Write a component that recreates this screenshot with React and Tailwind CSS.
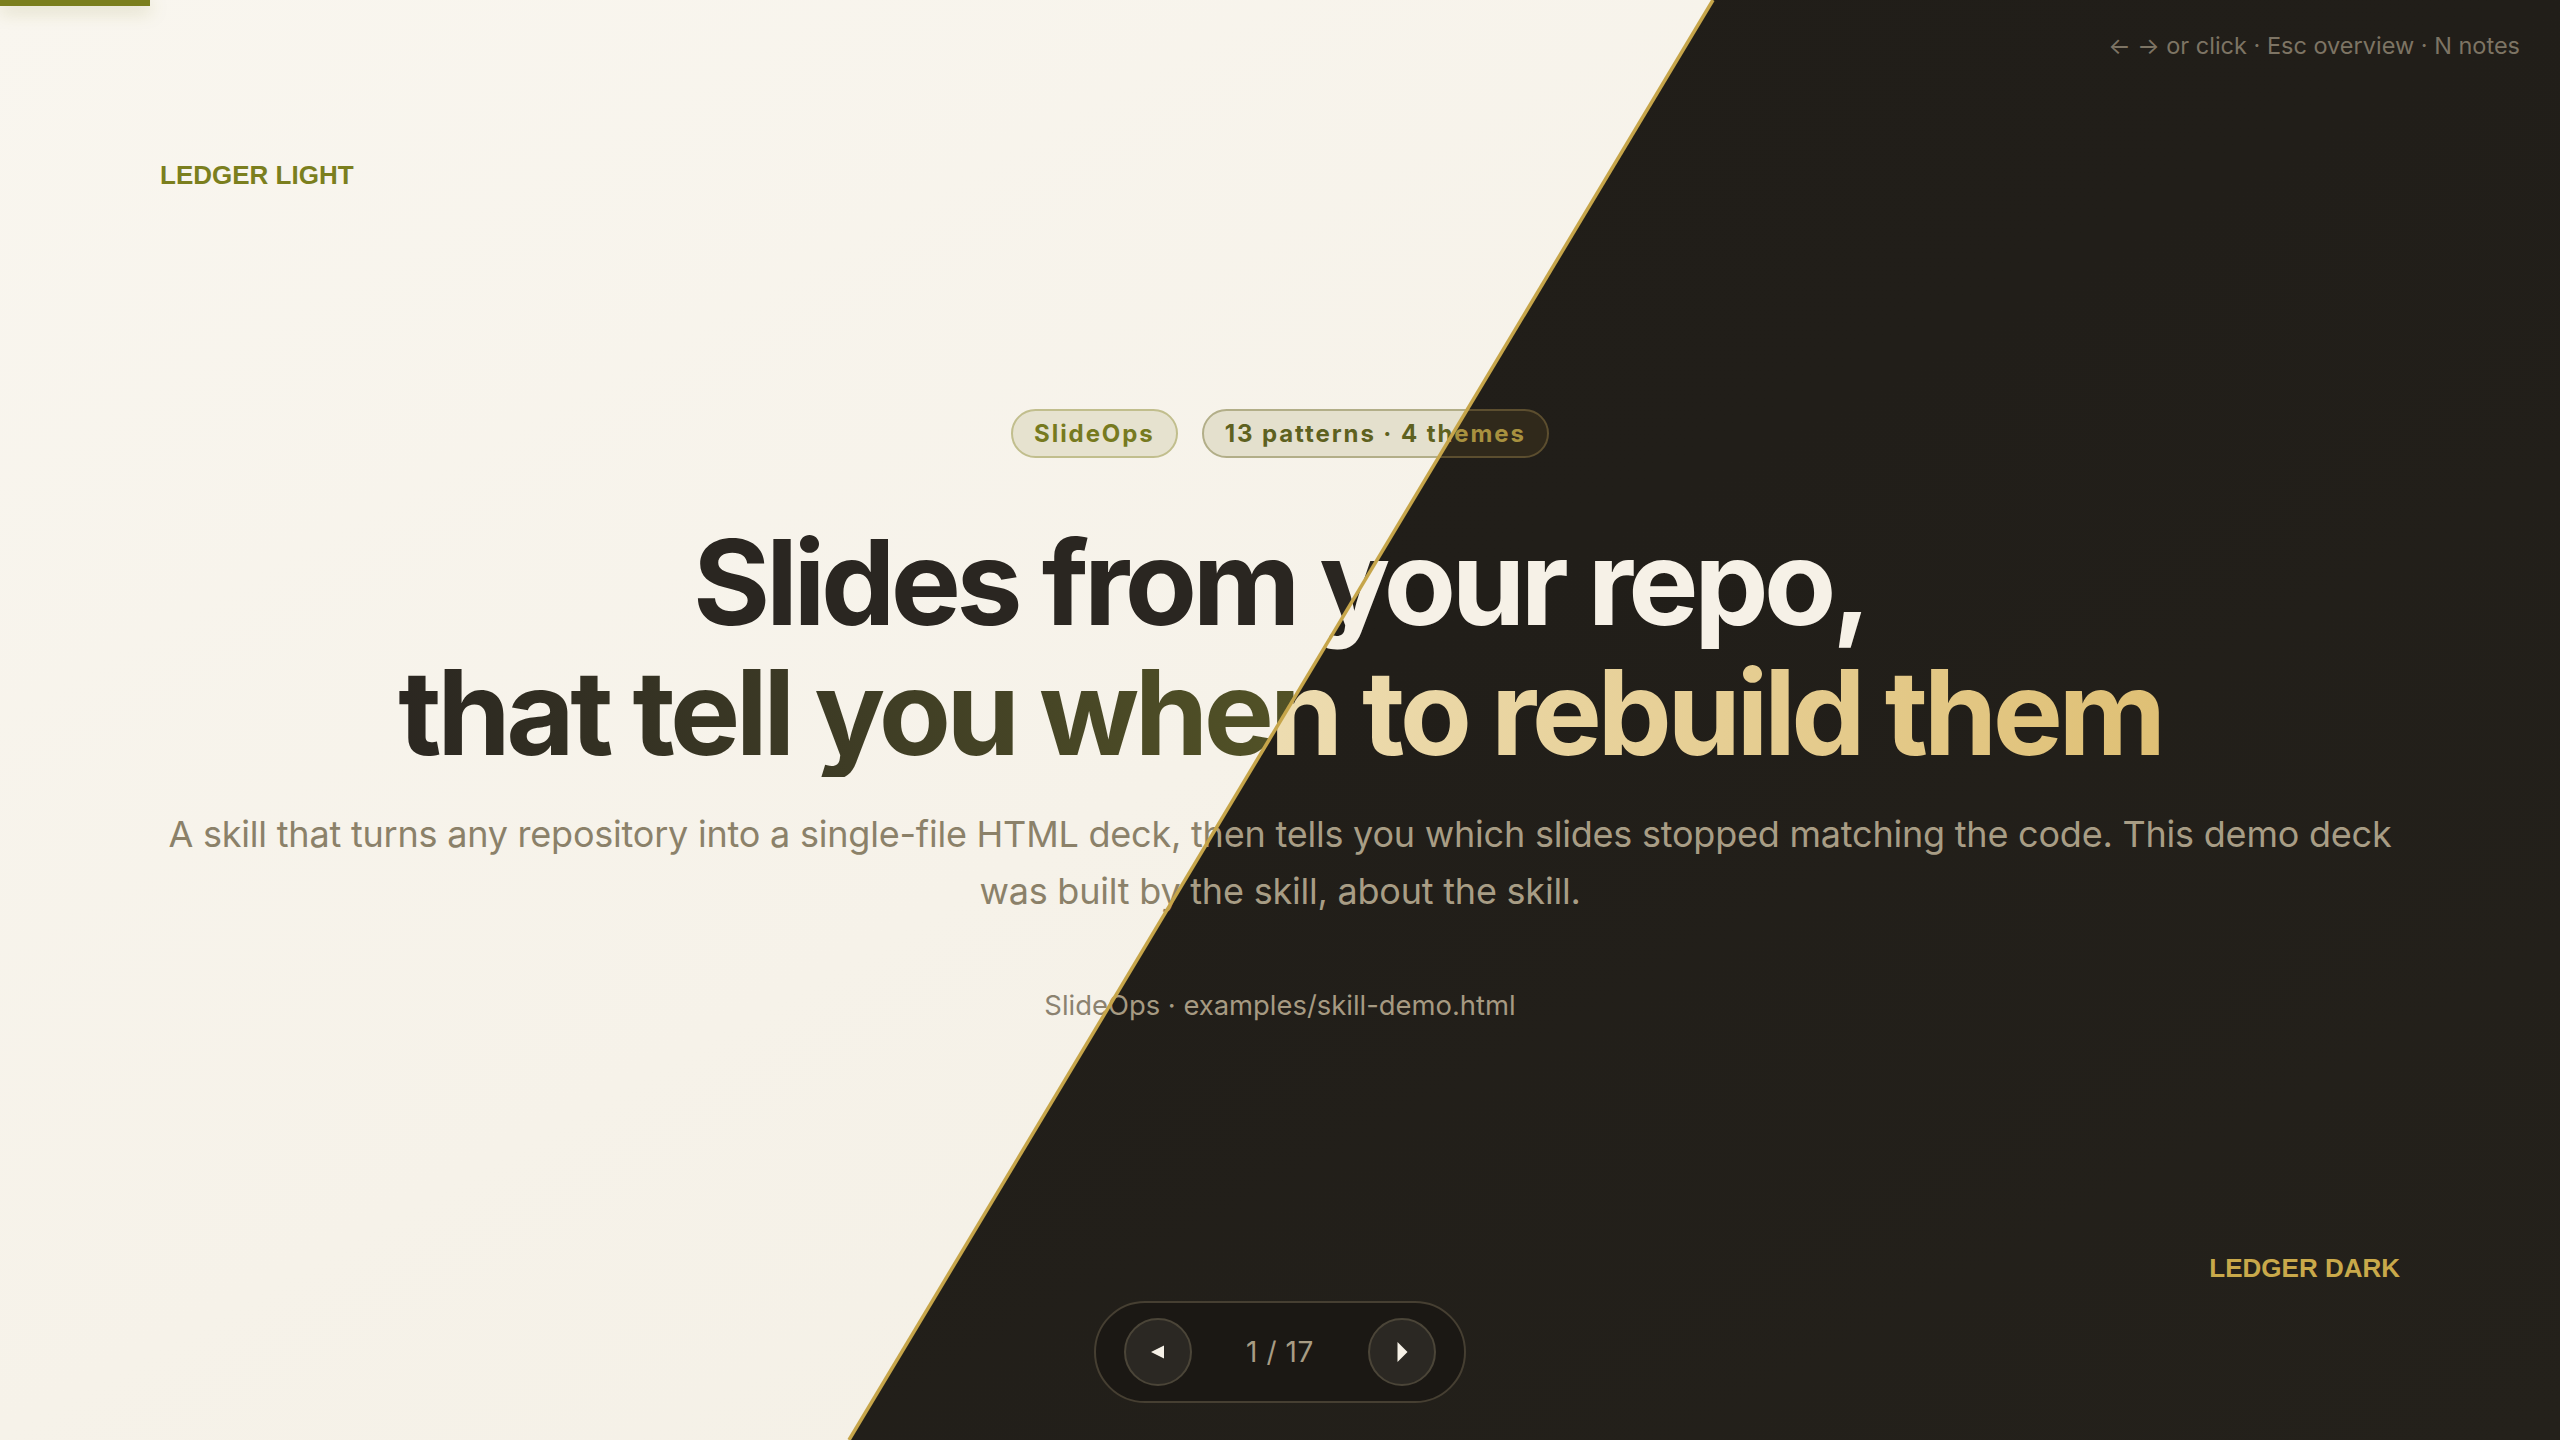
import React from "react";

const THEMES = {
  light: {
    root: "bg-gradient-to-br from-[#f9f6ef] via-[#f6f2e9] to-[#f2eee3]",
    bar: "bg-[#7b7f1e] shadow-[0_4px_18px_rgba(123,127,30,0.35)]",
    label: "text-[#7b7f1e]",
    labelText: "LEDGER LIGHT",
    labelPos: "top-[162px] left-[160px]",
    hint: "text-[#8d8472]",
    pillA: "bg-[#e6e2cf] border-[#c1be8d] text-[#777a1f]",
    pillB: "bg-[#e4e0cd] border-[#b2ae88] text-[#5e611f]",
    h1: "text-[#2a2621]",
    h2: "bg-gradient-to-r from-[#2b2721] to-[#7b7f1e]",
    sub: "text-[#8b8169]",
    meta: "text-[#8b8270]",
    nav: "bg-[#ebe6d8] border-[#cfc8b4]",
    btn: "bg-[#f4f0e6] border-[#cfc8b4]",
    btnIcon: "#2a2621",
    count: "text-[#8b8169]",
  },
  dark: {
    root: "bg-gradient-to-br from-[#201d18] via-[#211e19] to-[#24211b]",
    bar: "bg-[#c9a94a] shadow-[0_4px_18px_rgba(201,169,74,0.35)]",
    label: "text-[#c9a94a]",
    labelText: "LEDGER DARK",
    labelPos: "bottom-[159px] right-[160px]",
    hint: "text-[#7d7464]",
    pillA: "bg-[#30291b] border-[#5c4e2f] text-[#b39a44]",
    pillB: "bg-[#30291b] border-[#5c4e2f] text-[#a8913f]",
    h1: "text-[#f6f1e7]",
    h2: "bg-gradient-to-r from-[#f8f2e4] via-[#eddcb0] to-[#dfc075]",
    sub: "text-[#a89d85]",
    meta: "text-[#a69a82]",
    nav: "bg-[#1b1814] border-[#463f32]",
    btn: "bg-[#2b2823] border-[#4b4538]",
    btnIcon: "#f6f1e7",
    count: "text-[#a89c84]",
  },
};

function Slide({ theme }) {
  const t = THEMES[theme];
  return (
    <div className={`relative h-full w-full overflow-hidden ${t.root}`} style={{ fontFamily: "Inter, 'Noto Sans', sans-serif" }}>
      {/* progress */}
      <div className={`absolute left-0 top-0 h-[6px] w-[150px] ${t.bar}`} />

      {/* keyboard hint */}
      <div className={`absolute right-[40px] top-[34px] whitespace-nowrap text-[23.5px] leading-none ${t.hint}`}>
        ← → or click · Esc overview · N notes
      </div>

      {/* theme label */}
      <div
        className={`absolute ${t.labelPos} text-[26px] font-bold leading-[26px] ${t.label}`}
        style={{ fontFamily: "'Liberation Sans', Arial, sans-serif" }}
      >
        {t.labelText}
      </div>

      {/* content */}
      <div className="flex h-full w-full flex-col items-center justify-center px-[160px] pb-[6px] text-center">
        <div className="flex items-center gap-[24px]">
          <span className={`rounded-full border-2 px-[21px] py-[8px] text-[24px] font-bold leading-[29px] tracking-[0.08em] ${t.pillA}`}>
            SlideOps
          </span>
          <span className={`rounded-full border-2 px-[21px] py-[8px] text-[24px] font-bold leading-[29px] tracking-[0.08em] ${t.pillB}`}>
            13 patterns · 4 themes
          </span>
        </div>

        <h1 className="mt-[59px] text-[118px] font-bold leading-[130px] tracking-[-0.038em]">
          <span className={`block ${t.h1}`}>Slides from your repo,</span>
          <span className="block">
            <span className={`inline-block bg-clip-text text-transparent ${t.h2}`}>that tell you when to rebuild them</span>
          </span>
        </h1>

        <p className={`mt-[29px] w-full text-[36px] leading-[57px] tracking-[-0.006em] ${t.sub}`}>
          A skill that turns any repository into a single-file HTML deck, then tells you which slides stopped matching the code. This demo deck was built by the skill, about the skill.
        </p>

        <div className={`mt-[66px] text-[27.4px] leading-[39px] ${t.meta}`}>SlideOps · examples/skill-demo.html</div>
      </div>

      {/* nav */}
      <div className={`absolute bottom-[37px] left-1/2 flex -translate-x-1/2 items-center gap-[54px] rounded-full border-2 px-[28px] py-[15px] ${t.nav}`}>
        <button className={`flex h-[68px] w-[68px] items-center justify-center rounded-full border-2 ${t.btn}`}>
          <svg width="14" height="14" viewBox="0 0 14 14">
            <path d="M0 7 L13 0.5 L13 13.5 Z" fill={t.btnIcon} />
          </svg>
        </button>
        <span className={`w-[68px] whitespace-nowrap text-center text-[28px] leading-none tracking-[0.02em] ${t.count}`}>1 / 17</span>
        <button className={`flex h-[68px] w-[68px] items-center justify-center rounded-full border-2 ${t.btn}`}>
          <svg width="11" height="20" viewBox="0 0 11 20">
            <path d="M0.5 0 L10.5 10 L0.5 20 Z" fill={t.btnIcon} />
          </svg>
        </button>
      </div>
    </div>
  );
}

export default function App() {
  return (
    <div className="relative h-[1440px] w-[2560px] overflow-hidden">
      <Slide theme="light" />
      <div className="absolute inset-0 [clip-path:polygon(66.91%_0,100%_0,100%_100%,33.16%_100%)]">
        <Slide theme="dark" />
      </div>
      <svg className="pointer-events-none absolute inset-0 h-full w-full" viewBox="0 0 2560 1440" preserveAspectRatio="none">
        <line x1="1713" y1="0" x2="849" y2="1440" stroke="#c6a54a" strokeWidth="3.5" />
      </svg>
    </div>
  );
}
